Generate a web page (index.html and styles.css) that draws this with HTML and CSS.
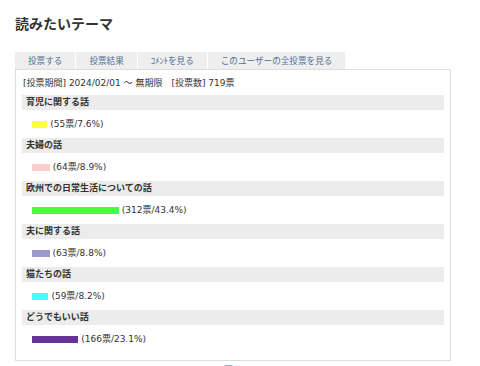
FILE: index.html
```html
<!DOCTYPE html>
<html lang="ja">
<head>
<meta charset="utf-8">
<link rel="stylesheet" href="styles.css">
</head>
<body>
<div class="page">
  <h1 class="title">読みたいテーマ</h1>
  <div class="tabs">
    <a class="tab">投票する</a>
    <a class="tab">投票結果</a>
    <a class="tab">ｺﾒﾝﾄを見る</a>
    <a class="tab">このユーザーの全投票を見る</a>
  </div>
  <div class="box">
    <div class="period">[投票期間] 2024/02/01 〜 無期限　[投票数] 719票</div>
    <div class="item">
      <div class="item-head">育児に関する話</div>
      <div class="item-row"><span class="bar" style="width:15.2px;background:#ffff44"></span><span class="count">(55票/7.6%)</span></div>
    </div>
    <div class="item">
      <div class="item-head">夫婦の話</div>
      <div class="item-row"><span class="bar" style="width:17.8px;background:#ffcccc"></span><span class="count">(64票/8.9%)</span></div>
    </div>
    <div class="item">
      <div class="item-head">欧州での日常生活についての話</div>
      <div class="item-row"><span class="bar" style="width:86.8px;background:#44ff44"></span><span class="count">(312票/43.4%)</span></div>
    </div>
    <div class="item">
      <div class="item-head">夫に関する話</div>
      <div class="item-row"><span class="bar" style="width:17.6px;background:#9999cc"></span><span class="count">(63票/8.8%)</span></div>
    </div>
    <div class="item">
      <div class="item-head">猫たちの話</div>
      <div class="item-row"><span class="bar" style="width:16.4px;background:#44ffff"></span><span class="count">(59票/8.2%)</span></div>
    </div>
    <div class="item">
      <div class="item-head">どうでもいい話</div>
      <div class="item-row"><span class="bar" style="width:46.2px;background:#663399"></span><span class="count">(166票/23.1%)</span></div>
    </div>
  </div>
  <div class="back"><a>[戻る]</a></div>
</div>
</body>
</html>
```

FILE: styles.css
```css
html, body {
  margin: 0;
  padding: 0;
  background: #fff;
}
body {
  font-family: "DejaVu Sans", "Noto Sans CJK JP", sans-serif;
  color: #333;
  font-size: 9px;
}
.page {
  padding: 13px 15px 0 15px;
}
.title {
  margin: 0;
  font-family: "Noto Sans CJK JP", sans-serif;
  font-size: 14px;
  line-height: 20px;
  font-weight: bold;
  color: #333;
}
.tabs {
  display: flex;
  gap: 1px;
  margin-top: 19px;
  height: 17px;
}
.tab {
  display: block;
  background: #eeeeee;
  color: #4f6e96;
  padding: 0 13px;
  line-height: 17px;
  font-family: "Noto Sans CJK JP", sans-serif;
  font-size: 8.6px;
  text-decoration: none;
}
.box {
  width: 436px;
  border: 1px solid #dddddd;
  padding: 6px 6px 7px 6px;
  box-sizing: border-box;
}
.period {
  line-height: 14px;
  font-size: 9px;
  padding-left: 1px;
  margin-bottom: 5px;
}
.item-head {
  background: #ececec;
  font-weight: bold;
  line-height: 15px;
  padding-left: 4px;
  font-size: 9px;
}
.item-row {
  display: flex;
  align-items: center;
  gap: 3px;
  height: 14px;
  padding: 7px 0 7px 10px;
  line-height: 14px;
  font-size: 9px;
}
.bar {
  display: block;
  height: 7px;
}
.back {
  text-align: center;
  margin-top: 2px;
  line-height: 14px;
  width: 436px;
}
.back a {
  color: #4f6e96;
  font-family: "Noto Sans CJK JP", sans-serif;
}
```
